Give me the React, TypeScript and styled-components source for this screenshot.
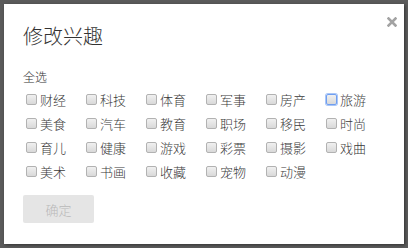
import styled, { createGlobalStyle } from 'styled-components'

const GlobalStyle = createGlobalStyle`
  html, body {
    margin: 0;
    padding: 0;
    background: #5b5b5b;
  }
  body {
    font-family: "Noto Sans CJK SC", "Noto Sans", sans-serif;
  }
`

const Backdrop = styled.div`
  width: 408px;
  height: 248px;
  padding: 4px;
  box-sizing: border-box;
  background: #5b5b5b;
`

const Dialog = styled.div`
  position: relative;
  width: 400px;
  height: 240px;
  box-sizing: border-box;
  padding: 20px 19px 0;
  background: #fff;
  box-shadow: 1px 1px 3px rgba(0, 0, 0, 0.45);
`

const Title = styled.h2`
  margin: 0;
  font-size: 20px;
  line-height: 24px;
  font-weight: 300;
  color: #333;
`

const Close = styled.button`
  position: absolute;
  top: 13px;
  right: 7px;
  width: 10px;
  height: 10px;
  padding: 0;
  border: 0;
  background: none;
  cursor: pointer;
  display: flex;
  align-items: center;
  justify-content: center;
`

const SelectAll = styled.div`
  margin-top: 21px;
  font-size: 12px;
  line-height: 16px;
  font-weight: 300;
  color: #333;
`

const Grid = styled.div`
  margin-top: 2px;
  display: grid;
  grid-template-columns: repeat(6, 60px);
  grid-auto-rows: 24px;
`

const Item = styled.label`
  display: flex;
  align-items: center;
  font-size: 13px;
  font-weight: 300;
  color: #3a3a3a;
  white-space: nowrap;
`

const Box = styled.span<{ $focused?: boolean }>`
  width: 9px;
  height: 9px;
  margin: 0 3px 0 3px;
  border: 1px solid ${(p) => (p.$focused ? '#6f9ef0' : '#b2b2b2')};
  border-radius: 2px;
  background: linear-gradient(#f0f0f0, #d9d9d9);
  box-shadow: ${(p) => (p.$focused ? '0 0 0 1px #a9c6f7' : 'none')};
`

const Confirm = styled.button`
  margin-top: 12px;
  width: 71px;
  height: 28px;
  border: 0;
  border-radius: 2px;
  background: #e5e5e5;
  color: #b9b9b9;
  font-family: inherit;
  font-size: 13px;
  font-weight: 300;
`

const topics = [
  '财经', '科技', '体育', '军事', '房产', '旅游',
  '美食', '汽车', '教育', '职场', '移民', '时尚',
  '育儿', '健康', '游戏', '彩票', '摄影', '戏曲',
  '美术', '书画', '收藏', '宠物', '动漫',
]

export default function App() {
  return (
    <>
      <GlobalStyle />
      <Backdrop>
        <Dialog>
          <Close aria-label="关闭">
            <svg width="10" height="10" viewBox="0 0 10 10">
              <path d="M1.5 1.5 L8.5 8.5 M8.5 1.5 L1.5 8.5" stroke="#a3a3a3" strokeWidth="2.6" strokeLinecap="square" />
            </svg>
          </Close>
          <Title>修改兴趣</Title>
          <SelectAll>全选</SelectAll>
          <Grid>
            {topics.map((t) => (
              <Item key={t}>
                <Box $focused={t === '旅游'} />
                {t}
              </Item>
            ))}
          </Grid>
          <Confirm disabled>确定</Confirm>
        </Dialog>
      </Backdrop>
    </>
  )
}
